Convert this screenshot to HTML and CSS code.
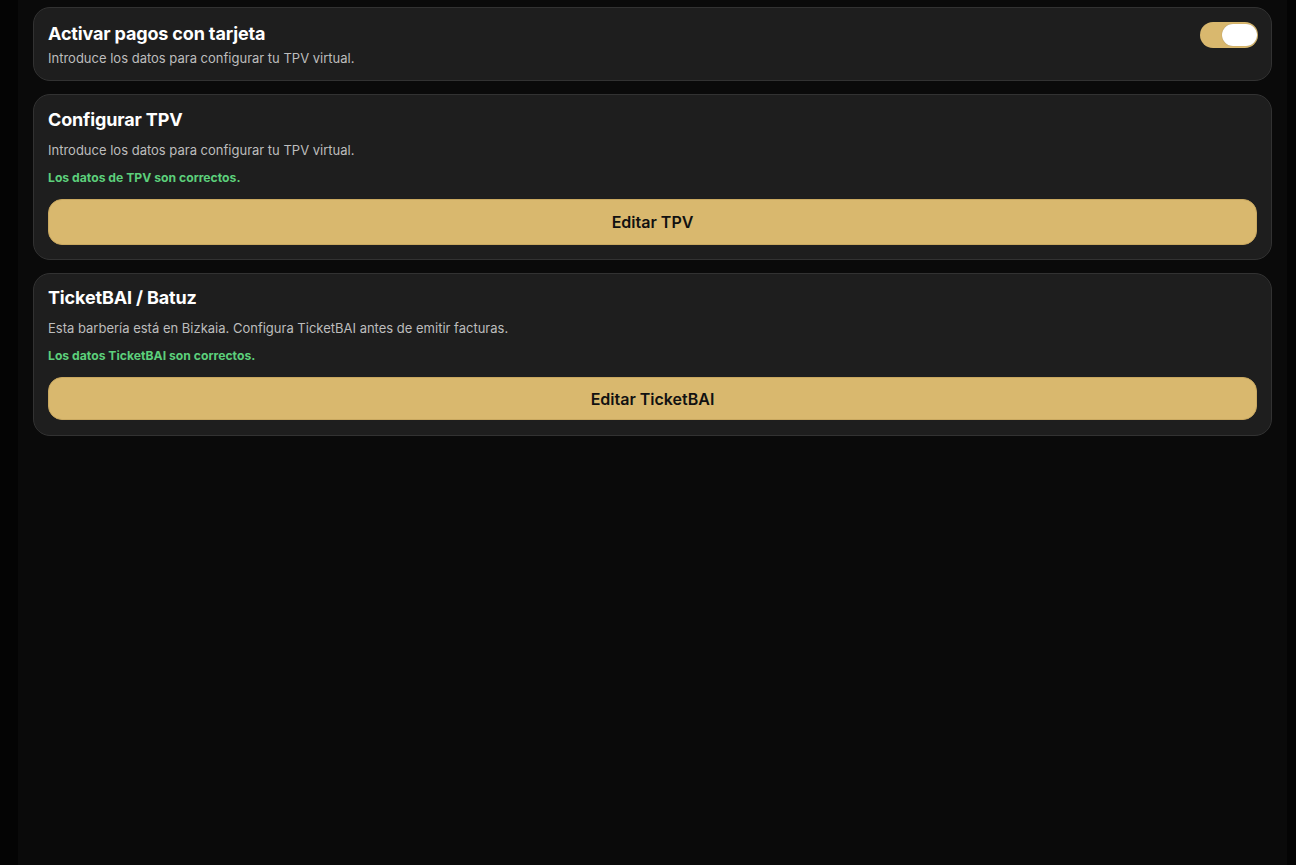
FILE: index.html
```html
<!DOCTYPE html>
<html lang="es">
<head>
<meta charset="utf-8">
<title>Pagos</title>
<link rel="stylesheet" href="styles.css">
</head>
<body>
<main class="page">
  <section class="card card-row">
    <div class="card-text">
      <h2 class="title">Activar pagos con tarjeta</h2>
      <p class="desc tight">Introduce los datos para configurar tu TPV virtual.</p>
    </div>
    <div class="toggle" role="switch" aria-checked="true"><span class="knob"></span></div>
  </section>

  <section class="card">
    <h2 class="title">Configurar TPV</h2>
    <p class="desc">Introduce los datos para configurar tu TPV virtual.</p>
    <p class="ok">Los datos de TPV son correctos.</p>
    <button class="btn btn-tall">Editar TPV</button>
  </section>

  <section class="card card-b">
    <h2 class="title">TicketBAI / Batuz</h2>
    <p class="desc">Esta barbería está en Bizkaia. Configura TicketBAI antes de emitir facturas.</p>
    <p class="ok">Los datos TicketBAI son correctos.</p>
    <button class="btn">Editar TicketBAI</button>
  </section>
</main>
</body>
</html>
```

FILE: styles.css
```css
* { box-sizing: border-box; }
html, body { margin: 0; padding: 0; }
body {
  background: #040404;
  font-family: Inter, "Noto Sans", "Liberation Sans", sans-serif;
  color: #fff;
}
.page {
  margin: 0 9px 0 18px;
  min-height: 865px;
  background: #0a0a0a;
  padding: 7px 15px;
  display: flex;
  flex-direction: column;
  gap: 13px;
}
.card {
  background: #1e1e1e;
  border: 1px solid #323232;
  border-radius: 17px;
  padding: 13px 14px 14px 14px;
  display: flex;
  flex-direction: column;
}
.card-b { padding-top: 12px; padding-bottom: 15px; }
.card-row {
  flex-direction: row;
  justify-content: space-between;
  align-items: flex-start;
  padding-top: 14px;
  padding-right: 13px;
}
.title {
  margin: 0;
  font-size: 18px;
  line-height: 24px;
  font-weight: 700;
  letter-spacing: -0.15px;
  color: #fff;
}
.desc {
  margin: 10px 0 0;
  font-size: 13px;
  line-height: 16px;
  color: #bdbdbd;
}
.desc.tight { margin-top: 4px; }
.ok {
  margin: 12px 0 0;
  font-size: 12.2px;
  line-height: 16px;
  font-weight: 700;
  color: #5ccf7b;
}
.btn {
  margin-top: 13px;
  height: 43px;
  border: 1px solid #c9a860;
  border-radius: 14px;
  background: #d9b86e;
  color: #111;
  font-family: inherit;
  font-size: 16px;
  font-weight: 600;
  cursor: pointer;
}
.btn-tall { height: 46px; }
.toggle {
  width: 58px;
  height: 26px;
  border-radius: 13px;
  background: #d9b86e;
  display: flex;
  align-items: center;
  justify-content: flex-end;
  padding: 0 1px;
}
.knob {
  width: 35px;
  height: 22px;
  border-radius: 11px;
  background: #fff;
  box-shadow: 0 0 1px rgba(0,0,0,0.3);
}
```
